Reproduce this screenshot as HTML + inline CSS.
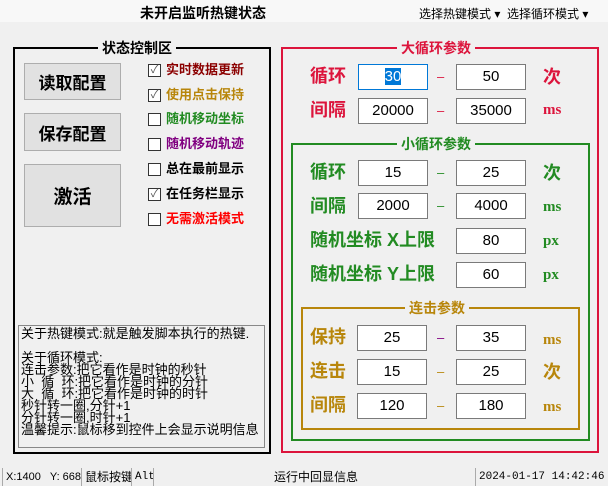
<!DOCTYPE html><html><head><meta charset="utf-8"><style>
*{margin:0;padding:0;box-sizing:border-box}
body{width:608px;height:486px;background:#f0f0f0;position:relative;overflow:hidden;font-family:"Liberation Sans","Noto Sans CJK SC",sans-serif;font-size:12px;color:#000}
.a{position:absolute;white-space:nowrap}
.box{position:absolute;border:2px solid}
.gt{position:absolute;background:#f0f0f0;padding:0 4px;font-weight:bold;font-size:14px;line-height:16px;top:-9px}
.btn{position:absolute;left:24px;width:97px;background:#e1e1e1;border:1px solid #adadad;font-size:17px;font-weight:bold;display:flex;align-items:center;justify-content:center}
.cb{position:absolute;left:148px;width:13px;height:13px;border:1px solid #333;background:#fff;font-size:11px;line-height:11px;text-align:center;color:#555}
.cl{position:absolute;left:166px;font-weight:bold;font-size:13px;line-height:14px;white-space:nowrap}
.in{position:absolute;width:70px;height:26px;background:#fff;border:1px solid #7a7a7a;text-align:center;font-size:15px;line-height:24px}
.lb{position:absolute;font-weight:bold;font-size:18px;line-height:20px;white-space:nowrap}
.u{position:absolute;font-weight:bold;font-size:15px;line-height:18px;font-family:"Liberation Serif","Noto Serif CJK SC",serif}
.d{position:absolute;font-size:13px;line-height:14px}
.r{color:#dc143c}.g{color:#228b22}.o{color:#b8860b}
.sb{position:absolute;top:468px;height:18px;border-left:1px solid #aaa;font-family:"Liberation Mono","Noto Sans CJK SC",monospace;font-size:11px;line-height:18px;padding-left:3px;white-space:nowrap;overflow:hidden}
</style></head><body>
<div class="a" style="left:0;top:0;width:608px;height:22px;background:#f8f8f8"></div>
<div class="a" style="left:140px;top:3px;font-weight:bold;font-size:14px">未开启监听热键状态</div>
<div class="a" style="left:419px;top:5px;font-size:12px">选择热键模式 ▾&nbsp; 选择循环模式 ▾</div>

<div class="box" style="left:13px;top:47px;width:258px;height:407px;border-color:#000"><div class="gt" style="left:83px">状态控制区</div></div>
<div class="btn" style="top:63px;height:37px">读取配置</div>
<div class="btn" style="top:113px;height:38px">保存配置</div>
<div class="btn" style="top:164px;height:63px;font-size:19px">激活</div>
<div class="cb" style="top:64px">✓</div><div class="cl" style="top:63px;color:#8b0000">实时数据更新</div>
<div class="cb" style="top:89px">✓</div><div class="cl" style="top:88px;color:#b8860b">使用点击保持</div>
<div class="cb" style="top:113px"></div><div class="cl" style="top:112px;color:#228b22">随机移动坐标</div>
<div class="cb" style="top:138px"></div><div class="cl" style="top:137px;color:#800080">随机移动轨迹</div>
<div class="cb" style="top:163px"></div><div class="cl" style="top:162px">总在最前显示</div>
<div class="cb" style="top:188px">✓</div><div class="cl" style="top:187px">在任务栏显示</div>
<div class="cb" style="top:213px"></div><div class="cl" style="top:212px;color:#ff0000">无需激活模式</div>
<div class="a" style="left:18px;top:325px;width:247px;height:123px;border:1px solid #888;padding:2px 2px;font-size:13px;line-height:12px;white-space:pre">关于热键模式:就是触发脚本执行的热键.

关于循环模式:
连击参数:把它看作是时钟的秒针
小  循  环:把它看作是时钟的分针
大  循  环:把它看作是时钟的时针
秒针转一圈,分针+1
分针转一圈,时针+1
温馨提示:鼠标移到控件上会显示说明信息</div>

<div class="box r" style="left:281px;top:47px;width:318px;height:406px;border-color:#dc143c"><div class="gt" style="left:114px">大循环参数</div></div>
<div class="lb r" style="left:310px;top:66px">循环</div>
<div class="in" style="left:358px;top:64px;border-color:#0078d7"><span style="background:#0078d7;color:#fff">30</span></div>
<div class="d r" style="left:437px;top:70px">–</div>
<div class="in" style="left:456px;top:64px">50</div>
<div class="lb r" style="left:543px;top:67px">次</div>
<div class="lb r" style="left:310px;top:100px">间隔</div>
<div class="in" style="left:358px;top:98px">20000</div>
<div class="d r" style="left:437px;top:104px">–</div>
<div class="in" style="left:456px;top:98px">35000</div>
<div class="u r" style="left:543px;top:101px">ms</div>

<div class="box" style="left:291px;top:143px;width:299px;height:298px;border-color:#228b22"><div class="gt g" style="left:104px">小循环参数</div></div>
<div class="lb g" style="left:310px;top:162px">循环</div>
<div class="in" style="left:358px;top:160px">15</div>
<div class="d g" style="left:437px;top:166px">–</div>
<div class="in" style="left:456px;top:160px">25</div>
<div class="lb g" style="left:543px;top:163px">次</div>
<div class="lb g" style="left:310px;top:196px">间隔</div>
<div class="in" style="left:358px;top:193px">2000</div>
<div class="d g" style="left:437px;top:199px">–</div>
<div class="in" style="left:456px;top:193px">4000</div>
<div class="u g" style="left:543px;top:198px">ms</div>
<div class="lb g" style="left:310px;top:230px">随机坐标 X上限</div>
<div class="in" style="left:456px;top:228px">80</div>
<div class="u g" style="left:543px;top:232px">px</div>
<div class="lb g" style="left:310px;top:264px">随机坐标 Y上限</div>
<div class="in" style="left:456px;top:262px">60</div>
<div class="u g" style="left:543px;top:266px">px</div>

<div class="box" style="left:301px;top:307px;width:279px;height:123px;border-color:#b8860b"><div class="gt o" style="left:102px">连击参数</div></div>
<div class="lb o" style="left:310px;top:327px">保持</div>
<div class="in" style="left:357px;top:325px">25</div>
<div class="d" style="left:437px;top:331px;color:#800080">–</div>
<div class="in" style="left:456px;top:325px">35</div>
<div class="u o" style="left:543px;top:331px">ms</div>
<div class="lb o" style="left:310px;top:361px">连击</div>
<div class="in" style="left:357px;top:359px">15</div>
<div class="d o" style="left:437px;top:365px">–</div>
<div class="in" style="left:456px;top:359px">25</div>
<div class="lb o" style="left:543px;top:362px">次</div>
<div class="lb o" style="left:310px;top:395px">间隔</div>
<div class="in" style="left:357px;top:393px">120</div>
<div class="d o" style="left:437px;top:399px">–</div>
<div class="in" style="left:456px;top:393px">180</div>
<div class="u o" style="left:543px;top:398px">ms</div>

<div class="sb" style="left:2px;width:79px;font-family:'Liberation Sans',sans-serif;font-size:11px">X:1400&nbsp;&nbsp; Y: 668</div>
<div class="sb" style="left:81px;width:50px;font-family:'Liberation Sans','Noto Sans CJK SC',sans-serif;font-size:12px">鼠标按键</div>
<div class="sb" style="left:131px;width:22px">Alt</div>
<div class="sb" style="left:153px;width:322px;text-align:center;font-family:'Liberation Sans','Noto Sans CJK SC',sans-serif;font-size:12px">运行中回显信息</div>
<div class="sb" style="left:475px;width:133px">2024-01-17 14:42:46</div>
</body></html>
